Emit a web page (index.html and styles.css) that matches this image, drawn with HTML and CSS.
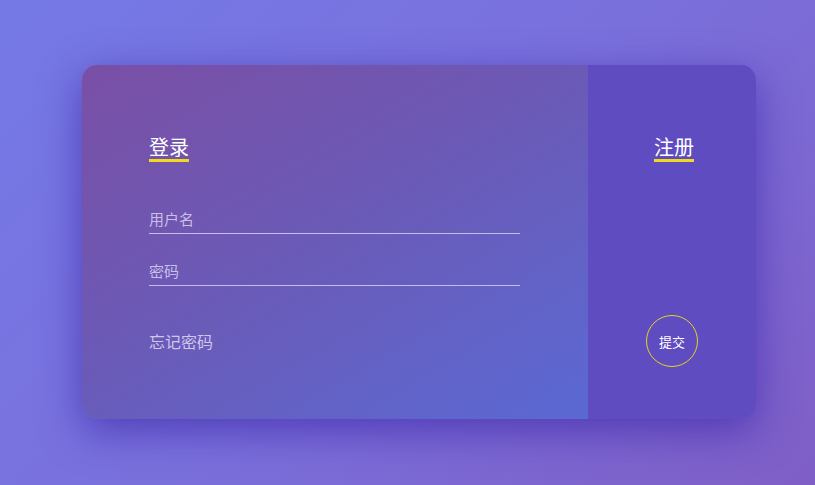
FILE: index.html
```html
<!DOCTYPE html>
<html lang="zh">
<head>
<meta charset="utf-8">
<title>登录</title>
<link rel="stylesheet" href="styles.css">
</head>
<body>
<div class="card">
  <div class="login">
    <div class="title">登录</div>
    <input class="field" type="text" placeholder="用户名">
    <input class="field" type="password" placeholder="密码">
    <div class="forget">忘记密码</div>
  </div>
  <div class="register">
    <div class="title">注册</div>
    <button class="submit">提交</button>
  </div>
</div>
</body>
</html>
```

FILE: styles.css
```css
html, body {
  margin: 0;
  height: 100%;
}
body {
  background: linear-gradient(135deg, #7479e6 0%, #7a70dc 50%, #7f5ec6 100%);
  font-family: "Noto Sans CJK SC", "Noto Sans", sans-serif;
  display: flex;
  align-items: center;
  padding-left: 82px;
  box-sizing: border-box;
}
.card {
  width: 674px;
  height: 354px;
  margin-top: -1px;
  display: flex;
  border-radius: 15px;
  overflow: hidden;
  box-shadow: 0 12px 40px rgba(62, 40, 170, 0.7);
}
.login {
  width: 506px;
  box-sizing: border-box;
  padding: 70px 68px 0 67px;
  background: linear-gradient(150deg, #7a4fa5 0%, #6a5bb8 50%, #5b69d4 100%);
  display: flex;
  flex-direction: column;
  align-items: flex-start;
}
.register {
  flex: 1;
  background: #5e4cc0;
  padding: 70px 0 0 4px;
  display: flex;
  flex-direction: column;
  align-items: center;
}
.title {
  color: #ffffff;
  font-size: 20px;
  line-height: 24px;
  border-bottom: 3px solid #f1d91b;
}
.field {
  width: 371px;
  height: 26px;
  box-sizing: content-box;
  border: none;
  border-bottom: 1px solid #c7bde9;
  background: transparent;
  outline: none;
  padding: 0 0 2px;
  margin: 0;
  color: #ffffff;
  font-family: "Noto Sans CJK SC", "Noto Sans", sans-serif;
  font-size: 15px;
}
.field:first-of-type {
  margin-top: 43px;
}
.field + .field {
  margin-top: 23px;
}
.field::placeholder {
  color: #c9bfe8;
}
.forget {
  margin-top: 44px;
  color: #d0c6ec;
  font-size: 16px;
  line-height: 22px;
}
.submit {
  margin: 153px 0 0 -4px;
  width: 52px;
  height: 52px;
  border-radius: 50%;
  border: 1px solid #e6d323;
  background: transparent;
  color: #ffffff;
  font-family: "Noto Sans CJK SC", "Noto Sans", sans-serif;
  font-size: 13px;
  padding: 0;
}
```
